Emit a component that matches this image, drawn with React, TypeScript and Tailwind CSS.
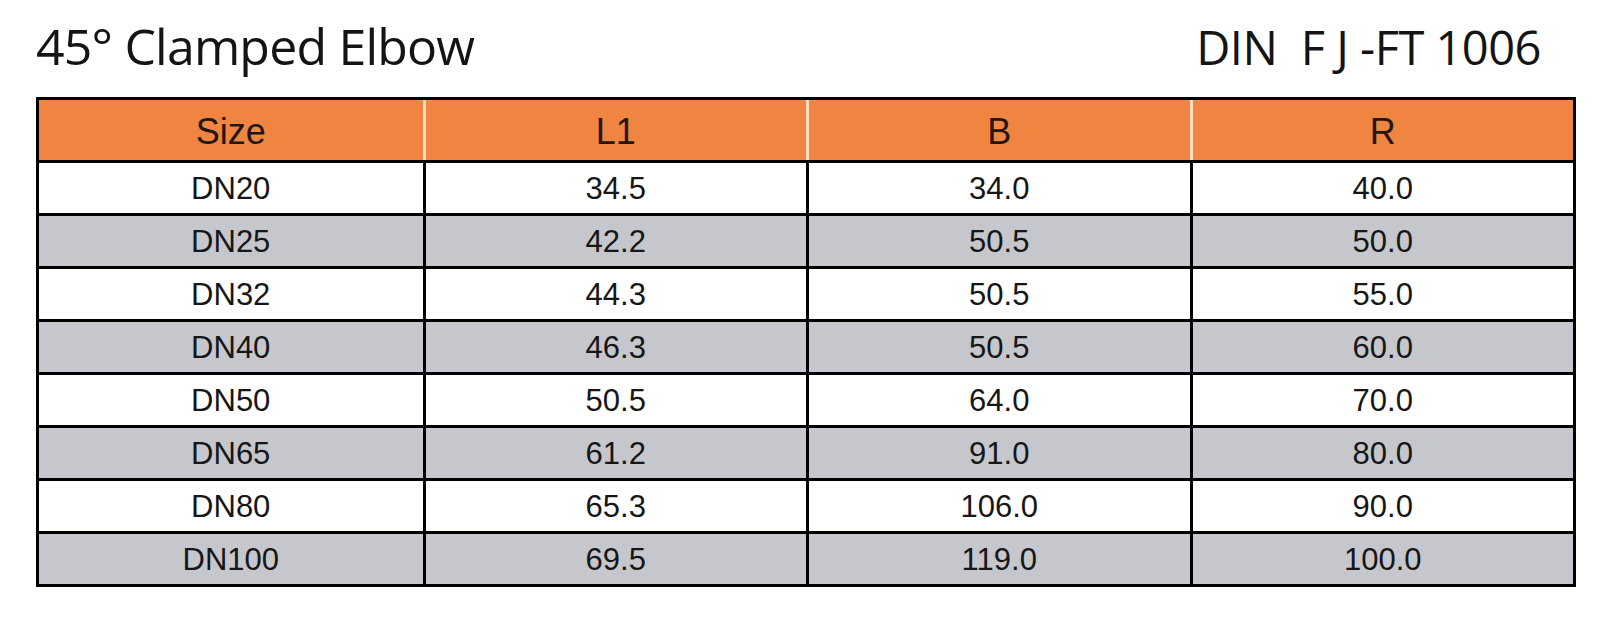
import React from "react";

const rows: [string, string, string, string][] = [
  ["DN20", "34.5", "34.0", "40.0"],
  ["DN25", "42.2", "50.5", "50.0"],
  ["DN32", "44.3", "50.5", "55.0"],
  ["DN40", "46.3", "50.5", "60.0"],
  ["DN50", "50.5", "64.0", "70.0"],
  ["DN65", "61.2", "91.0", "80.0"],
  ["DN80", "65.3", "106.0", "90.0"],
  ["DN100", "69.5", "119.0", "100.0"],
];

const headers = ["Size", "L1", "B", "R"];

export default function App() {
  return (
    <div className="w-[1620px] h-[624px] bg-white overflow-hidden">
      <div
        className="flex justify-between items-baseline pl-[36px] pr-[79px] pt-[21px] text-[#141414]"
        style={{ fontFamily: '"Open Sans", "Noto Sans", sans-serif' }}
      >
        <h1 className="text-[50px] leading-[50px] tracking-[-0.8px] font-normal">
          45° Clamped Elbow
        </h1>
        <div className="text-[47px] leading-[50px] tracking-[-0.5px] whitespace-pre">
          DIN  F J -FT 1006
        </div>
      </div>
      <div
        className="ml-[36px] mt-[25px] w-[1540px] border-[3px] border-black"
        style={{ fontFamily: '"Liberation Sans Narrow", "Liberation Sans", Arial, sans-serif' }}
      >
        <div className="grid grid-cols-4 h-[60px] bg-[#ef8541]">
          {headers.map((h, i) => (
            <div
              key={h}
              className={`flex items-center justify-center pt-[4px] text-[36px] text-[#24160c] ${
                i > 0 ? "border-l-[3px] border-[#f7dfc0]" : ""
              }`}
            >
              {h}
            </div>
          ))}
        </div>
        {rows.map((r, ri) => (
          <div
            key={r[0]}
            className={`grid grid-cols-4 h-[53px] border-t-[3px] border-black ${
              ri % 2 === 0 ? "bg-white" : "bg-[#c5c7cc]"
            }`}
          >
            {r.map((c, ci) => (
              <div
                key={ci}
                className={`flex items-center justify-center pt-[3px] text-[31px] text-[#161616] ${
                  ci > 0 ? "border-l-[3px] border-black" : ""
                }`}
              >
                {c}
              </div>
            ))}
          </div>
        ))}
      </div>
    </div>
  );
}
